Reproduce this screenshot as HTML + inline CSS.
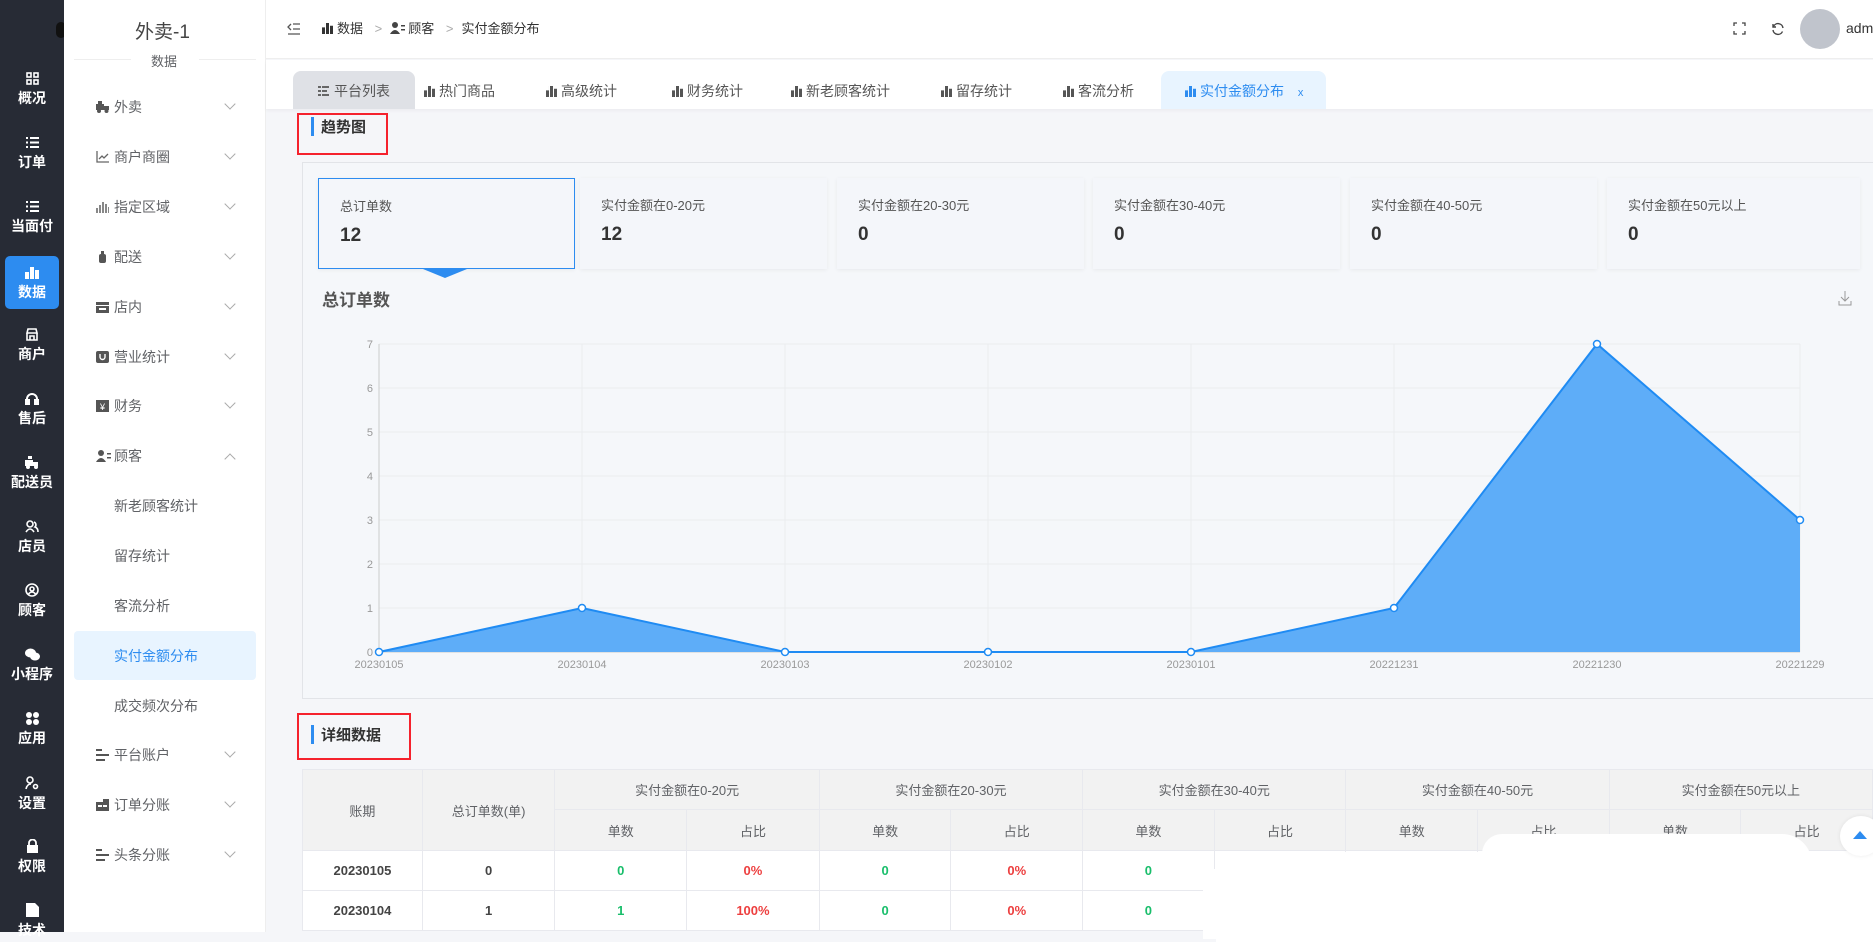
<!DOCTYPE html>
<html><head><meta charset="utf-8">
<style>
*{margin:0;padding:0;box-sizing:border-box}
body{width:1873px;height:932px;overflow:hidden;position:relative;background:#f5f6f9;font-family:"Liberation Sans","Noto Sans CJK SC",sans-serif;color:#606266}
.a{position:absolute;white-space:nowrap}
#dark{position:absolute;left:0;top:0;width:64px;height:932px;background:#272b35}
.di{position:absolute;left:0;width:64px;text-align:center;color:#fff;font-size:14px;font-weight:bold}
.di svg{display:block;margin:0 auto 3px}
#side{position:absolute;left:64px;top:0;width:202px;height:932px;background:#fff;border-right:1px solid #eee}
.mi{position:absolute;left:50px;width:130px;font-size:14px;color:#606266;line-height:20px}
.mi .ic{position:absolute;left:-18px;top:4px;width:13px;height:12px}
.chev{position:absolute;left:112px;top:3px;width:8px;height:8px;border-right:1px solid #aaa;border-bottom:1px solid #aaa;transform:rotate(45deg)}
.sub{position:absolute;left:50px;font-size:14px;color:#606266;line-height:20px}
.tab{position:absolute;top:74px;height:35px;font-size:14px;color:#555;line-height:35px}
.bar{display:inline-block;width:11px;height:11px;margin-right:4px;vertical-align:-1px;background:linear-gradient(to right,#555 0 3px,transparent 3px 4px,#555 4px 7px,transparent 7px 8px,#555 8px 11px);clip-path:polygon(0 40%,27% 40%,27% 0,64% 0,64% 25%,100% 25%,100% 100%,0 100%)}
.card{position:absolute;top:178px;height:91px;background:#f4f6fa;box-shadow:0 1px 4px rgba(0,0,0,.06)}
.card .l{position:absolute;left:21px;top:17px;font-size:13px;color:#555}
.card .n{position:absolute;left:21px;top:46px;font-size:19px;font-weight:bold;color:#333}
table{position:absolute;left:302px;top:769px;border-collapse:collapse;font-size:13px;table-layout:fixed}
td{border:1px solid #e8e9ee;text-align:center;color:#606266}
thead td{background:#f2f2f2}
tbody td{background:#fff;font-weight:bold;height:40px;color:#444}
.g{color:#19be6b!important}.r{color:#ed3f3f!important}
</style></head><body>

<div id="dark">
  <div style="position:absolute;left:56px;top:22px;width:10px;height:16px;border-radius:8px;background:#111"></div>
  <div class="di" style="top:72px"><svg width="13" height="13" viewBox="0 0 13 13" fill="none" stroke="#fff" stroke-width="1.6"><rect x="1" y="1" width="4" height="4"/><rect x="8" y="1" width="4" height="4"/><rect x="1" y="8" width="4" height="4"/><rect x="8" y="8" width="4" height="4"/></svg>概况</div>
  <div class="di" style="top:136px"><svg width="13" height="13" viewBox="0 0 13 13" fill="#fff"><rect x="0" y="1" width="2" height="2"/><rect x="4" y="1" width="9" height="2"/><rect x="0" y="5.5" width="2" height="2"/><rect x="4" y="5.5" width="9" height="2"/><rect x="0" y="10" width="2" height="2"/><rect x="4" y="10" width="9" height="2"/></svg>订单</div>
  <div class="di" style="top:200px"><svg width="13" height="13" viewBox="0 0 13 13" fill="#fff"><rect x="0" y="1" width="2" height="2"/><rect x="4" y="1" width="9" height="2"/><rect x="0" y="5.5" width="2" height="2"/><rect x="4" y="5.5" width="9" height="2"/><rect x="0" y="10" width="2" height="2"/><rect x="4" y="10" width="9" height="2"/></svg>当面付</div>
  <div style="position:absolute;left:5px;top:256px;width:54px;height:53px;border-radius:5px;background:#2d8cf0"></div>
  <div class="di" style="top:266px"><svg width="14" height="13" viewBox="0 0 14 13" fill="#fff"><rect x="0" y="6" width="4" height="7"/><rect x="5" y="1" width="4" height="12"/><rect x="10" y="4" width="4" height="9"/></svg>数据</div>
  <div class="di" style="top:328px"><svg width="14" height="13" viewBox="0 0 14 13" fill="none" stroke="#fff" stroke-width="1.6"><path d="M2 5 L3 1 H11 L12 5 Z M2 5 V12 H12 V5 M5 12 V8 H9 V12"/></svg>商户</div>
  <div class="di" style="top:392px"><svg width="14" height="13" viewBox="0 0 14 13" fill="none" stroke="#fff" stroke-width="2"><path d="M2 10 V7 A5 5 0 0 1 12 7 V10"/><rect x="1" y="8" width="3" height="4" fill="#fff"/><rect x="10" y="8" width="3" height="4" fill="#fff"/></svg>售后</div>
  <div class="di" style="top:456px"><svg width="14" height="13" viewBox="0 0 14 13" fill="#fff"><rect x="0" y="4" width="8" height="6"/><rect x="8" y="6" width="5" height="4"/><circle cx="3" cy="11" r="2"/><circle cx="11" cy="11" r="2"/><rect x="3" y="0" width="4" height="3"/></svg>配送员</div>
  <div class="di" style="top:520px"><svg width="14" height="13" viewBox="0 0 14 13" fill="none" stroke="#fff" stroke-width="1.6"><circle cx="5" cy="4" r="3"/><path d="M1 12 Q5 6 9 12 M9 2 A3 3 0 0 1 10 7 Q13 8 13 12"/></svg>店员</div>
  <div class="di" style="top:583px"><svg width="14" height="14" viewBox="0 0 14 14" fill="none" stroke="#fff" stroke-width="1.6"><circle cx="7" cy="7" r="6"/><circle cx="7" cy="6" r="2"/><path d="M3.5 11 Q7 7 10.5 11"/></svg>顾客</div>
  <div class="di" style="top:648px"><svg width="15" height="13" viewBox="0 0 15 13" fill="#fff"><ellipse cx="5.5" cy="5" rx="5.5" ry="4.5"/><ellipse cx="10" cy="8.5" rx="5" ry="4"/></svg>小程序</div>
  <div class="di" style="top:712px"><svg width="13" height="13" viewBox="0 0 13 13" fill="#fff"><circle cx="3" cy="3" r="3"/><circle cx="10" cy="3" r="3"/><circle cx="3" cy="10" r="3"/><circle cx="10" cy="10" r="3"/></svg>应用</div>
  <div class="di" style="top:776px"><svg width="14" height="14" viewBox="0 0 14 14" fill="none" stroke="#fff" stroke-width="1.6"><circle cx="5" cy="4" r="3"/><path d="M1 13 Q2 8 6 8"/><circle cx="10.5" cy="10.5" r="2"/></svg>设置</div>
  <div class="di" style="top:839px"><svg width="13" height="14" viewBox="0 0 13 14" fill="#fff"><path d="M3 6 V4 A3.5 3.5 0 0 1 10 4 V6" fill="none" stroke="#fff" stroke-width="1.8"/><rect x="1" y="6" width="11" height="8"/></svg>权限</div>
  <div class="di" style="top:903px"><svg width="13" height="14" viewBox="0 0 13 14" fill="#fff"><path d="M0 0 H9 L13 4 V14 H0 Z"/></svg>技术</div>
</div>

<div id="side">
  <div class="a" style="left:71px;top:17px;font-size:19px;color:#444">外卖-1</div>
  <div class="a" style="left:10px;top:59px;width:57px;border-top:1px solid #eee"></div>
  <div class="a" style="left:135px;top:59px;width:57px;border-top:1px solid #eee"></div>
  <div class="a" style="left:87px;top:51px;font-size:13px;color:#606266">数据</div>

  <div class="mi" style="top:97px"><svg class="ic" viewBox="0 0 13 12" fill="#555"><rect x="0" y="3" width="8" height="6"/><rect x="8" y="5" width="5" height="4"/><circle cx="3" cy="10" r="2"/><circle cx="10.5" cy="10" r="2"/><rect x="2" y="0" width="4" height="3"/></svg>外卖<i class="chev"></i></div>
  <div class="mi" style="top:147px"><svg class="ic" viewBox="0 0 13 12" fill="none" stroke="#666" stroke-width="1.3"><path d="M1 0 V11 H13 M3 8 L6 5 L8 7 L12 3"/></svg>商户商圈<i class="chev"></i></div>
  <div class="mi" style="top:197px"><svg class="ic" viewBox="0 0 13 12" fill="#888"><rect x="0" y="7" width="2" height="5"/><rect x="3" y="4" width="2" height="8"/><rect x="6" y="1" width="2" height="11"/><rect x="9" y="3" width="2" height="9"/><rect x="12" y="6" width="1" height="6"/></svg>指定区域<i class="chev"></i></div>
  <div class="mi" style="top:247px"><svg class="ic" viewBox="0 0 13 12" fill="#555"><rect x="3" y="3" width="7" height="9" rx="2"/><rect x="5" y="0" width="3" height="3"/></svg>配送<i class="chev"></i></div>
  <div class="mi" style="top:297px"><svg class="ic" viewBox="0 0 13 12" fill="#555"><rect x="0" y="1" width="13" height="3"/><rect x="0" y="5" width="13" height="7"/><rect x="3" y="7" width="7" height="2" fill="#fff"/></svg>店内<i class="chev"></i></div>
  <div class="mi" style="top:347px"><svg class="ic" viewBox="0 0 13 12" fill="#555"><rect x="0" y="0" width="13" height="12" rx="2"/><path d="M4 3 V6 A2.5 2.5 0 0 0 9 6 V3" fill="none" stroke="#fff" stroke-width="1.4"/></svg>营业统计<i class="chev"></i></div>
  <div class="mi" style="top:396px"><svg class="ic" viewBox="0 0 13 12" fill="#555"><rect x="0" y="0" width="13" height="12"/><text x="6.5" y="10" font-size="9" fill="#fff" text-anchor="middle">¥</text></svg>财务<i class="chev"></i></div>
  <div class="mi" style="top:446px"><svg class="ic" viewBox="0 0 15 12" style="width:15px" fill="#555"><circle cx="5" cy="3" r="3"/><path d="M0 12 Q5 4 10 12 Z"/><rect x="11" y="3" width="4" height="1.5"/><rect x="11" y="7" width="4" height="1.5"/></svg>顾客<i class="chev" style="transform:rotate(-135deg);top:9px"></i></div>
  <div class="sub" style="top:496px">新老顾客统计</div>
  <div class="sub" style="top:546px">留存统计</div>
  <div class="sub" style="top:596px">客流分析</div>
  <div class="a" style="left:10px;top:631px;width:182px;height:49px;background:#e8f4ff;border-radius:4px"></div>
  <div class="sub" style="top:646px;color:#2d8cf0">实付金额分布</div>
  <div class="sub" style="top:696px">成交频次分布</div>
  <div class="mi" style="top:745px"><svg class="ic" viewBox="0 0 13 12" fill="#555"><rect x="0" y="0" width="6" height="2"/><rect x="0" y="5" width="13" height="2"/><rect x="0" y="10" width="9" height="2"/></svg>平台账户<i class="chev"></i></div>
  <div class="mi" style="top:795px"><svg class="ic" viewBox="0 0 13 12" fill="#555"><rect x="0" y="3" width="13" height="9"/><rect x="2" y="6" width="4" height="2" fill="#fff"/><rect x="7" y="6" width="4" height="2" fill="#fff"/><rect x="7" y="0" width="6" height="3"/></svg>订单分账<i class="chev"></i></div>
  <div class="mi" style="top:845px"><svg class="ic" viewBox="0 0 13 12" fill="#555"><rect x="0" y="0" width="6" height="2"/><rect x="0" y="5" width="13" height="2"/><rect x="0" y="10" width="9" height="2"/></svg>头条分账<i class="chev"></i></div>
</div>

<!-- header -->
<div class="a" style="left:266px;top:0;width:1607px;height:59px;background:#fff;border-bottom:1px solid #eee"></div>
<svg class="a" style="left:287px;top:23px" width="13" height="12" viewBox="0 0 13 12" fill="none" stroke="#555" stroke-width="1.3"><path d="M4 1 L1 4 L4 7 M6 1 H13 M6 6 H13 M1 11 H13"/></svg>
<div class="a" style="left:322px;top:20px;font-size:13px;color:#333;line-height:18px"><span class="bar" style="filter:brightness(.6)"></span>数据 <span style="color:#aaa;margin:0 8px">&gt;</span><svg width="15" height="12" viewBox="0 0 15 12" fill="#444" style="vertical-align:-1px;margin-right:3px"><circle cx="5" cy="3" r="3"/><path d="M0 12 Q5 4 10 12 Z"/><rect x="11" y="3" width="4" height="1.5"/><rect x="11" y="7" width="4" height="1.5"/></svg>顾客 <span style="color:#aaa;margin:0 8px">&gt;</span>实付金额分布</div>
<svg class="a" style="left:1733px;top:22px" width="13" height="13" viewBox="0 0 13 13" fill="none" stroke="#444" stroke-width="1.3"><path d="M1 4 V1 H4 M9 1 H12 V4 M12 9 V12 H9 M4 12 H1 V9"/></svg>
<svg class="a" style="left:1771px;top:22px" width="14" height="14" viewBox="0 0 14 14" fill="none" stroke="#444" stroke-width="1.4"><path d="M12 6 A5 5 0 0 0 2.5 4.5 M2 8 A5 5 0 0 0 11.5 9.5"/><path d="M2 2 V5 H5" /></svg>
<div class="a" style="left:1800px;top:9px;width:40px;height:40px;border-radius:50%;background:#c0c4cc"></div>
<div class="a" style="left:1846px;top:20px;font-size:14px;color:#333">adm</div>

<!-- tabs -->
<div class="a" style="left:266px;top:60px;width:1607px;height:49px;background:#fff;box-shadow:0 2px 3px rgba(0,0,0,.04)"></div>
<div class="a" style="left:293px;top:71px;width:122px;height:38px;background:#dfe1e6;border-radius:8px 8px 0 0"></div>
<div class="tab" style="left:318px"><svg width="11" height="10" viewBox="0 0 11 10" fill="#666" style="margin-right:5px"><rect x="0" y="0" width="3" height="2"/><rect x="4" y="0" width="7" height="2"/><rect x="0" y="4" width="3" height="2"/><rect x="4" y="4" width="5" height="2"/><rect x="0" y="8" width="3" height="2"/><rect x="4" y="8" width="7" height="2"/></svg>平台列表</div>
<div class="tab" style="left:424px"><span class="bar"></span>热门商品</div>
<div class="tab" style="left:546px"><span class="bar"></span>高级统计</div>
<div class="tab" style="left:672px"><span class="bar"></span>财务统计</div>
<div class="tab" style="left:791px"><span class="bar"></span>新老顾客统计</div>
<div class="tab" style="left:941px"><span class="bar"></span>留存统计</div>
<div class="tab" style="left:1063px"><span class="bar"></span>客流分析</div>
<div class="a" style="left:1161px;top:71px;width:165px;height:38px;background:#e8f4ff;border-radius:8px 8px 0 0"></div>
<div class="tab" style="left:1185px;color:#2d8cf0"><span class="bar" style="background:linear-gradient(to right,#2d8cf0 0 3px,transparent 3px 4px,#2d8cf0 4px 7px,transparent 7px 8px,#2d8cf0 8px 11px)"></span>实付金额分布 <span style="font-size:11px;margin-left:10px">x</span></div>

<!-- trend title -->
<div class="a" style="left:297px;top:113px;width:91px;height:42px;border:2px solid #f5222d"></div>
<div class="a" style="left:311px;top:117px;width:3px;height:19px;background:#2d8cf0"></div>
<div class="a" style="left:321px;top:116px;font-size:15px;font-weight:bold;color:#333">趋势图</div>

<!-- panel -->
<div class="a" style="left:302px;top:162px;width:1580px;height:537px;border:1px solid #e2e4e8;background:#f5f7fa"></div>
<div class="card" style="left:318px;width:257px;border:1px solid #2d8cf0"><div class="l">总订单数</div><div class="n">12</div></div>
<div class="a" style="left:423px;top:269px;width:0;height:0;border-left:22px solid transparent;border-right:22px solid transparent;border-top:9px solid #2d8cf0"></div>
<div class="card" style="left:580px;width:247px"><div class="l">实付金额在0-20元</div><div class="n">12</div></div>
<div class="card" style="left:837px;width:247px"><div class="l">实付金额在20-30元</div><div class="n">0</div></div>
<div class="card" style="left:1093px;width:247px"><div class="l">实付金额在30-40元</div><div class="n">0</div></div>
<div class="card" style="left:1350px;width:247px"><div class="l">实付金额在40-50元</div><div class="n">0</div></div>
<div class="card" style="left:1607px;width:253px"><div class="l">实付金额在50元以上</div><div class="n">0</div></div>
<div class="a" style="left:322px;top:286px;font-size:17px;font-weight:bold;color:#555">总订单数</div>
<svg class="a" style="left:1838px;top:291px" width="14" height="15" viewBox="0 0 14 15" fill="none" stroke="#999" stroke-width="1"><path d="M7 0 V10 M3 6 L7 10 L11 6 M1 10 V14 H13 V10"/></svg>

<svg class="a" style="left:0;top:0" width="1873" height="700" font-family="Liberation Sans, sans-serif">
  <g stroke="#eaecef" stroke-width="1">
    <line x1="379" y1="344" x2="1800" y2="344"/><line x1="379" y1="388" x2="1800" y2="388"/><line x1="379" y1="432" x2="1800" y2="432"/><line x1="379" y1="476" x2="1800" y2="476"/><line x1="379" y1="520" x2="1800" y2="520"/><line x1="379" y1="564" x2="1800" y2="564"/><line x1="379" y1="608" x2="1800" y2="608"/>
    <line x1="582" y1="344" x2="582" y2="652"/><line x1="785" y1="344" x2="785" y2="652"/><line x1="988" y1="344" x2="988" y2="652"/><line x1="1191" y1="344" x2="1191" y2="652"/><line x1="1394" y1="344" x2="1394" y2="652"/><line x1="1597" y1="344" x2="1597" y2="652"/><line x1="1800" y1="344" x2="1800" y2="652"/>
  </g>
  <line x1="379" y1="344" x2="379" y2="652" stroke="#ccc"/>
  <line x1="379" y1="652" x2="1800" y2="652" stroke="#ccc"/>
  <g font-size="11" fill="#999" text-anchor="end">
    <text x="373" y="348">7</text><text x="373" y="392">6</text><text x="373" y="436">5</text><text x="373" y="480">4</text><text x="373" y="524">3</text><text x="373" y="568">2</text><text x="373" y="612">1</text><text x="373" y="656">0</text>
  </g>
  <g font-size="11" fill="#999" text-anchor="middle">
    <text x="379" y="668">20230105</text><text x="582" y="668">20230104</text><text x="785" y="668">20230103</text><text x="988" y="668">20230102</text><text x="1191" y="668">20230101</text><text x="1394" y="668">20221231</text><text x="1597" y="668">20221230</text><text x="1800" y="668">20221229</text>
  </g>
  <path d="M379 652 L582 608 L785 652 L988 652 L1191 652 L1394 608 L1597 344 L1800 520 L1800 652 Z" fill="#5eadf8"/>
  <path d="M379 652 L582 608 L785 652 L988 652 L1191 652 L1394 608 L1597 344 L1800 520" fill="none" stroke="#1f8bf3" stroke-width="2"/>
  <g fill="#fff" stroke="#1f8bf3" stroke-width="1.5">
    <circle cx="379" cy="652" r="3.5"/><circle cx="582" cy="608" r="3.5"/><circle cx="785" cy="652" r="3.5"/><circle cx="988" cy="652" r="3.5"/><circle cx="1191" cy="652" r="3.5"/><circle cx="1394" cy="608" r="3.5"/><circle cx="1597" cy="344" r="3.5"/><circle cx="1800" cy="520" r="3.5"/>
  </g>
</svg>

<!-- detail title -->
<div class="a" style="left:297px;top:713px;width:114px;height:47px;border:2px solid #f5222d"></div>
<div class="a" style="left:311px;top:725px;width:3px;height:19px;background:#2d8cf0"></div>
<div class="a" style="left:321px;top:724px;font-size:15px;font-weight:bold;color:#333">详细数据</div>

<table>
<colgroup><col style="width:120px"><col style="width:133px"><col style="width:132px"><col style="width:133px"><col style="width:132px"><col style="width:132px"><col style="width:132px"><col style="width:132px"><col style="width:132px"><col style="width:132px"><col style="width:132px"><col style="width:132px"></colgroup>
<thead>
<tr style="height:40px"><td rowspan="2">账期</td><td rowspan="2">总订单数(单)</td><td colspan="2">实付金额在0-20元</td><td colspan="2">实付金额在20-30元</td><td colspan="2">实付金额在30-40元</td><td colspan="2">实付金额在40-50元</td><td colspan="2">实付金额在50元以上</td></tr>
<tr style="height:41px"><td>单数</td><td>占比</td><td>单数</td><td>占比</td><td>单数</td><td>占比</td><td>单数</td><td>占比</td><td>单数</td><td>占比</td></tr>
</thead>
<tbody>
<tr><td>20230105</td><td>0</td><td class="g">0</td><td class="r">0%</td><td class="g">0</td><td class="r">0%</td><td class="g">0</td><td class="r">0%</td><td></td><td></td><td></td><td></td></tr>
<tr><td>20230104</td><td>1</td><td class="g">1</td><td class="r">100%</td><td class="g">0</td><td class="r">0%</td><td class="g">0</td><td></td><td></td><td></td><td></td><td></td></tr>
</tbody>
</table>
<!-- white smudge -->
<div class="a" style="left:1216px;top:852px;width:700px;height:90px;background:#fff"></div>
<div class="a" style="left:1203px;top:869px;width:20px;height:70px;background:#fff"></div>
<div class="a" style="left:1482px;top:834px;width:330px;height:40px;background:#fff;border-radius:20px 30px 0 0"></div>
<div class="a" style="left:1840px;top:816px;width:42px;height:40px;border-radius:50%;background:#fff;box-shadow:0 0 4px rgba(0,0,0,.08)"></div>
<div class="a" style="left:1853px;top:831px;width:0;height:0;border-left:7px solid transparent;border-right:7px solid transparent;border-bottom:8px solid #2d8cf0"></div>
</body></html>
